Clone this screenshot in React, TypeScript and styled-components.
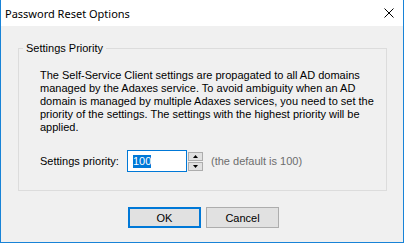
import React from "react";
import styled, { createGlobalStyle } from "styled-components";

const GlobalStyle = createGlobalStyle`
  html, body { margin: 0; padding: 0; background: #ffffff; }
  * { box-sizing: border-box; }
`;

const UI_FONT = `"Liberation Sans", Arial, sans-serif`;
const TITLE_FONT = `"Noto Sans", "Open Sans", sans-serif`;

const Window = styled.div`
  width: 404px;
  height: 243px;
  border: 1px solid #1883d7;
  border-top: none;
  background: #f0f0f0;
  display: flex;
  flex-direction: column;
  font-family: ${UI_FONT};
  font-size: 11px;
  line-height: 13px;
  color: #000;
`;

const TitleBar = styled.div`
  height: 26px;
  flex: none;
  background: #ffffff;
  display: flex;
  align-items: center;
  justify-content: space-between;
  padding: 0 9px 0 4px;
`;

const Title = styled.span`
  font-family: ${TITLE_FONT};
  font-size: 11px;
  color: #000;
`;

const CloseIcon = styled.svg`
  width: 10px;
  height: 10px;
  display: block;
`;

const Body = styled.div`
  flex: 1;
  display: flex;
  flex-direction: column;
  padding: 16px 0 0 17px;
`;

const Group = styled.fieldset`
  width: 369px;
  margin: 0;
  padding: 0;
  border: 1px solid #dcdcdc;
  min-inline-size: 0;
`;

const Legend = styled.legend`
  margin-left: 4px;
  padding: 0 3px;
  font-size: 11px;
  line-height: 13px;
`;

const GroupContent = styled.div`
  padding: 14px 0 18px 21px;
  display: flex;
  flex-direction: column;
  gap: 16px;
`;

const Description = styled.p`
  margin: 0;
  white-space: nowrap;
`;

const Row = styled.div`
  display: flex;
  align-items: center;
  height: 22px;
`;

const Label = styled.span`
  width: 87px;
  flex: none;
`;

const Input = styled.div`
  width: 60px;
  height: 22px;
  border: 1px solid #0078d7;
  background: #ffffff;
  display: flex;
  align-items: center;
  padding-left: 5px;
`;

const Selected = styled.span`
  background: #0078d7;
  color: #ffffff;
  line-height: 13px;
`;

const Spinner = styled.div`
  display: flex;
  flex-direction: column;
  gap: 1px;
  margin-left: 1px;
`;

const SpinButton = styled.div`
  width: 15px;
  height: 9px;
  border: 1px solid #adadad;
  background: #e1e1e1;
  display: flex;
  align-items: center;
  justify-content: center;
`;

const Hint = styled.span`
  margin-left: 8px;
  color: #6d6d6d;
`;

const Buttons = styled.div`
  display: flex;
  gap: 5px;
  margin-top: 16px;
  padding-left: 110px;
`;

const Button = styled.button<{ $primary?: boolean }>`
  width: 73px;
  height: 21px;
  margin: 0;
  padding: 0;
  background: #e1e1e1;
  border: ${(p) => (p.$primary ? "2px solid #0078d7" : "1px solid #adadad")};
  font-family: ${UI_FONT};
  font-size: 11px;
  color: #000;
`;

const Arrow = ({ up }: { up?: boolean }) => (
  <svg width="5" height="3" viewBox="0 0 5 3">
    <polygon points={up ? "0,3 5,3 2.5,0" : "0,0 5,0 2.5,3"} fill="#000" />
  </svg>
);

export default function App() {
  return (
    <>
      <GlobalStyle />
      <Window>
        <TitleBar>
          <Title>Password Reset Options</Title>
          <CloseIcon viewBox="0 0 10 10">
            <path d="M0.5 0.5 L9.5 9.5 M9.5 0.5 L0.5 9.5" stroke="#000" strokeWidth="1" fill="none" />
          </CloseIcon>
        </TitleBar>
        <Body>
          <Group>
            <Legend>Settings Priority</Legend>
            <GroupContent>
              <Description>
                The Self-Service Client settings are propagated to all AD domains
                <br />
                managed by the Adaxes service. To avoid ambiguity when an AD
                <br />
                domain is managed by multiple Adaxes services, you need to set the
                <br />
                priority of the settings. The settings with the highest priority will be
                <br />
                applied.
              </Description>
              <Row>
                <Label>Settings priority:</Label>
                <Input>
                  <Selected>100</Selected>
                </Input>
                <Spinner>
                  <SpinButton>
                    <Arrow up />
                  </SpinButton>
                  <SpinButton>
                    <Arrow />
                  </SpinButton>
                </Spinner>
                <Hint>(the default is 100)</Hint>
              </Row>
            </GroupContent>
          </Group>
          <Buttons>
            <Button $primary>OK</Button>
            <Button>Cancel</Button>
          </Buttons>
        </Body>
      </Window>
    </>
  );
}
